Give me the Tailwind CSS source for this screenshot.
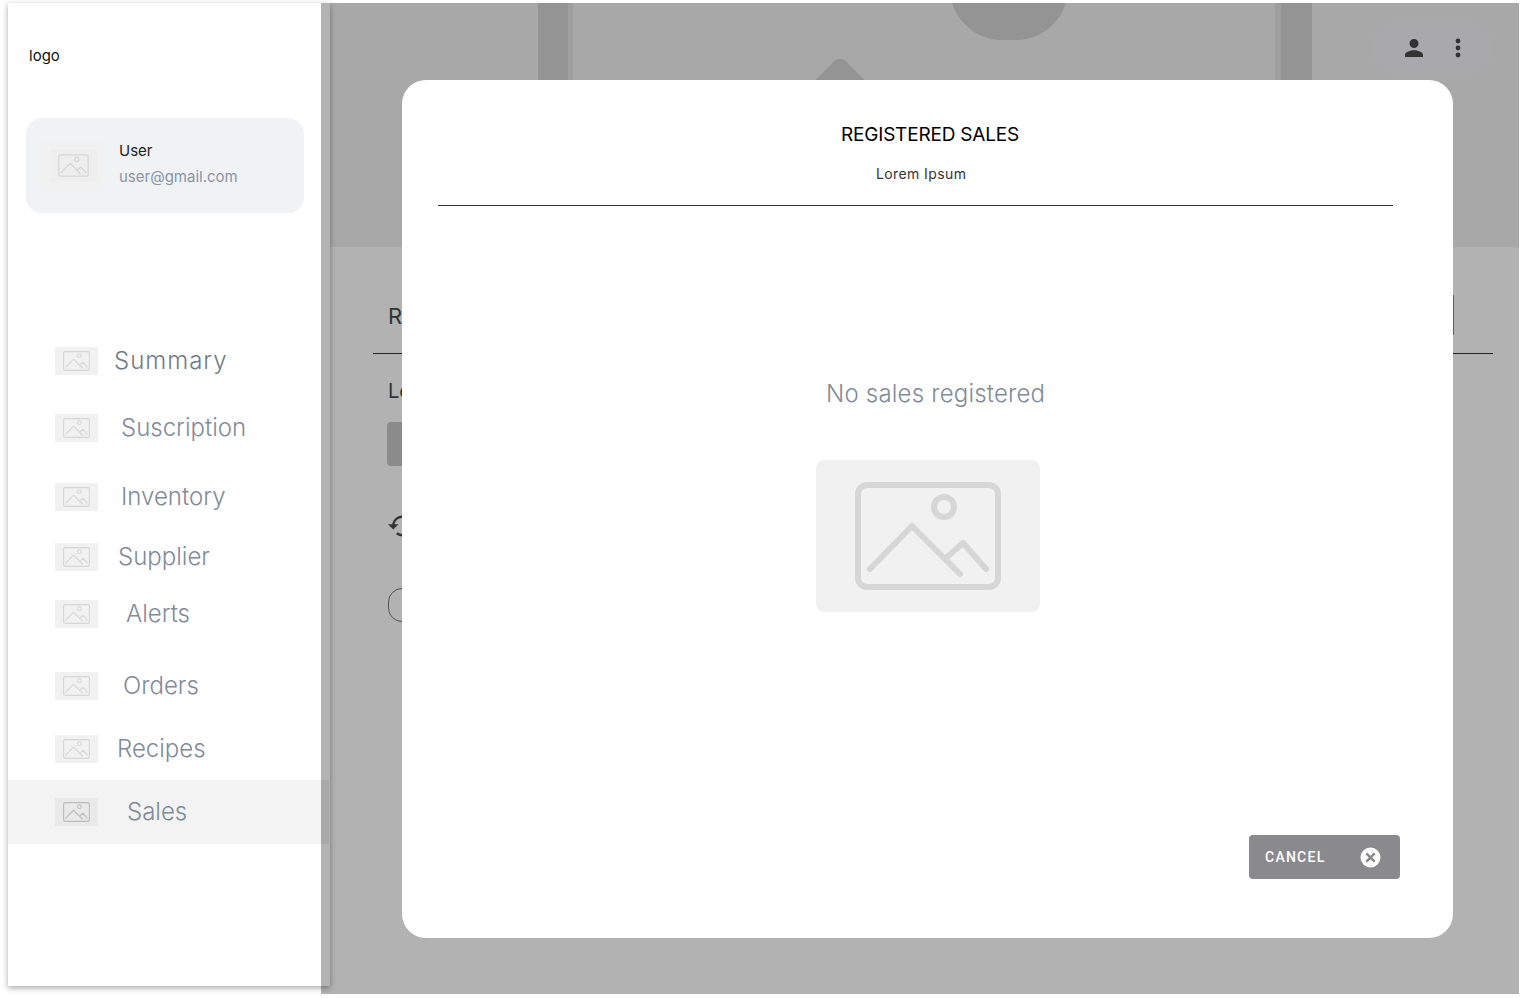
<!DOCTYPE html>
<html lang="en">
<head>
    <meta charset="UTF-8">
    <meta name="viewport" content="width=device-width, initial-scale=1.0">
    <title>Registered sales</title>
    <script src="https://cdn.jsdelivr.net/npm/@tailwindcss/browser@4"></script>
</head>
<body class="bg-white font-[Inter,sans-serif]">
    <svg class="hidden">
        <symbol id="ph" viewBox="0 0 224 152">
            <rect x="42" y="25" width="140" height="102" rx="9" fill="none" stroke="currentColor" stroke-width="6"/>
            <circle cx="128" cy="47" r="10" fill="none" stroke="currentColor" stroke-width="6"/>
            <path d="M54 109L96 66L144 114M131 97L147 83L170 109" fill="none" stroke="currentColor" stroke-width="6" stroke-linecap="round" stroke-linejoin="round"/>
        </symbol>
    </svg>

    <div class="relative w-[1520px] h-[998px] overflow-hidden">
        <!-- page under the modal -->
        <div class="flex h-[991px] mt-[3px] ml-[8px] w-[1511px]">
            <aside class="relative z-10 w-[322px] h-[983px] shrink-0 bg-white shadow-[0_2px_6px_rgba(0,0,0,0.35)]">
                <p class="pl-[21px] pt-[43px] text-[15px] leading-5 text-[#111]">logo</p>
                <div class="ml-[18px] mt-[52px] w-[278px] h-[95px] rounded-2xl bg-[#f1f2f4] flex items-center pl-[24px]">
                    <div class="relative w-[47px] h-[33px] bg-[#eeeeee] text-[#d6d6d6] shadow-[0_0_0_8px_#f0f1f0]">
                        <svg class="w-full h-full"><use href="#ph"/></svg>
                    </div>
                    <div class="ml-[22px] -mt-[4px]">
                        <p class="text-[15px] leading-5 text-[#222]">User</p>
                        <p class="mt-[6px] text-[15px] leading-5 text-[#8a94a6]">user@gmail.com</p>
                    </div>
                </div>

                <nav class="mt-[134px] text-[24px] font-light text-[#7f8b99]">
                    <div class="flex items-center h-[28px] pl-[47px]">
                        <div class="w-[43px] h-[28px] bg-[#f1f1f1] text-[#d6d6d6]"><svg class="w-full h-full"><use href="#ph"/></svg></div>
                        <span class="ml-[16px] -mt-[1px] tracking-[1px] text-[#6f7b89]">Summary</span>
                    </div>
                    <div class="flex items-center h-[28px] pl-[47px] mt-[39px]">
                        <div class="w-[43px] h-[28px] bg-[#f1f1f1] text-[#d6d6d6]"><svg class="w-full h-full"><use href="#ph"/></svg></div>
                        <span class="ml-[23px]">Suscription</span>
                    </div>
                    <div class="flex items-center h-[28px] pl-[47px] mt-[41px]">
                        <div class="w-[43px] h-[28px] bg-[#f1f1f1] text-[#d6d6d6]"><svg class="w-full h-full"><use href="#ph"/></svg></div>
                        <span class="ml-[23px]">Inventory</span>
                    </div>
                    <div class="flex items-center h-[28px] pl-[47px] mt-[32px]">
                        <div class="w-[43px] h-[28px] bg-[#f1f1f1] text-[#d6d6d6]"><svg class="w-full h-full"><use href="#ph"/></svg></div>
                        <span class="ml-[20px]">Supplier</span>
                    </div>
                    <div class="flex items-center h-[28px] pl-[47px] mt-[29px]">
                        <div class="w-[43px] h-[28px] bg-[#f1f1f1] text-[#d6d6d6]"><svg class="w-full h-full"><use href="#ph"/></svg></div>
                        <span class="ml-[28px]">Alerts</span>
                    </div>
                    <div class="flex items-center h-[28px] pl-[47px] mt-[44px]">
                        <div class="w-[43px] h-[28px] bg-[#f1f1f1] text-[#d6d6d6]"><svg class="w-full h-full"><use href="#ph"/></svg></div>
                        <span class="ml-[25px]">Orders</span>
                    </div>
                    <div class="flex items-center h-[28px] pl-[47px] mt-[35px]">
                        <div class="w-[43px] h-[28px] bg-[#f1f1f1] text-[#d6d6d6]"><svg class="w-full h-full"><use href="#ph"/></svg></div>
                        <span class="ml-[19px]">Recipes</span>
                    </div>
                    <div class="flex items-center h-[64px] pl-[47px] mt-[17px] mr-px bg-[#f3f3f3]">
                        <div class="w-[43px] h-[28px] bg-[#e9e9e9] text-[#bcbcbc]"><svg class="w-full h-full"><use href="#ph"/></svg></div>
                        <span class="ml-[29px]">Sales</span>
                    </div>
                </nav>
            </aside>

            <main class="relative flex-1">
                <!-- enlarged placeholder banner -->
                <div class="relative h-[244px] bg-[#f1f1f1] overflow-hidden">
                    <div class="absolute left-[208px] top-0 w-[30px] h-full bg-[#d4d4d4] shadow-[5px_0_0_#e2e2e2]"></div>
                    <div class="absolute left-[951px] top-0 w-[31px] h-full bg-[#d4d4d4] shadow-[-6px_0_0_#e2e2e2]"></div>
                    <div class="absolute left-[620px] top-[-67px] w-[118px] h-[104px] rounded-full bg-[#d4d4d4]"></div>
                    <div class="absolute left-[482px] top-[64px] w-[56px] h-[56px] rotate-45 rounded-lg bg-[#d4d4d4]"></div>
                    <div class="absolute left-[1042px] top-[20px] w-[120px] h-[50px] rounded-full bg-[#f2f3f5] flex items-center pl-[30px] gap-[29px]">
                        <svg class="w-[24px] h-[24px]" viewBox="0 0 24 24" fill="#4a4a4a"><path d="M12 12a4.500 4.500 0 1 0 0-9 4.500 4.500 0 0 0 0 9zm0 2.200c-3.200 0-9 1.600-9 4.600V21h18v-2.200c0-3-5.800-4.600-9-4.600z"/></svg>
                        <svg class="w-[6px] h-[20px]" viewBox="0 0 6 20" fill="#4a4a4a"><circle cx="3" cy="3" r="2.400"/><circle cx="3" cy="10" r="2.400"/><circle cx="3" cy="17" r="2.400"/></svg>
                    </div>
                </div>
                <div class="relative pl-[58px] pr-[26px]">
                    <div class="absolute left-[1123px] top-[48px] h-[40px] w-px bg-[#8a8a8a]"></div>
                    <div class="-ml-[15px] h-[107px] pt-[55px] border-b border-[#333]">
                        <p class="pl-[15px] text-[22px] leading-7 text-[#4a4a4a]">Registered sales</p>
                    </div>
                    <p class="mt-[25px] text-[20px] leading-6 text-[#4a4a4a]">Lorem ipsum</p>
                    <div class="mt-[19px] -ml-px w-[200px] h-[44px] rounded bg-[#c8c8c8]"></div>
                    <svg class="mt-[46px] w-[28px] h-[28px]" viewBox="0 0 24 24" fill="none" stroke="#4a4a4a" stroke-width="2"><path d="M4.500 12a8 8 0 1 1 3 6.200"/><path d="M0 10.500h9L4.500 15z" fill="#4a4a4a" stroke="none"/></svg>
                    <div class="mt-[48px] w-[120px] h-[34px] rounded-[14px] border border-[#777]"></div>
                </div>
            </main>
        </div>

        <!-- overlay and modal -->
        <div class="absolute z-20 left-[321px] top-[3px] w-[1198px] h-[991px] bg-black/30"></div>
        <section class="absolute z-30 left-[402px] top-[80px] w-[1051px] h-[858px] rounded-[24px] bg-white">
            <h2 class="absolute left-[439px] top-[41px] text-[19px] leading-7 font-normal tracking-[-0.2px] text-black whitespace-nowrap">REGISTERED SALES</h2>
            <p class="absolute left-[474px] top-[84px] text-[14px] leading-5 tracking-[0.4px] text-[#333]">Lorem Ipsum</p>
            <div class="absolute left-[36px] top-[125px] w-[955px] border-t border-[#333]"></div>
            <p class="absolute left-[424px] top-[298px] text-[24px] leading-8 font-light tracking-[0.2px] text-[#7f8b99] whitespace-nowrap">No sales registered</p>
            <div class="absolute left-[414px] top-[380px] w-[224px] h-[152px] rounded-lg bg-[#f1f1f1] text-[#d6d6d6]">
                <svg class="w-full h-full"><use href="#ph"/></svg>
            </div>
            <button class="absolute left-[847px] top-[755px] w-[151px] h-[44px] rounded bg-[#8a898e] flex items-center justify-between pl-[16px] pr-[19px] font-[Roboto,sans-serif] text-[14px] font-medium tracking-[1.25px] text-white">
                CANCEL
                <svg class="w-[21px] h-[21px]" viewBox="0 0 21 21"><circle cx="10.500" cy="10.500" r="10" fill="#fff"/><path d="M6.300 6.300l8.400 8.400M14.700 6.300l-8.400 8.400" stroke="#8a898e" stroke-width="2.400"/></svg>
            </button>
        </section>
    </div>
</body>
</html>
